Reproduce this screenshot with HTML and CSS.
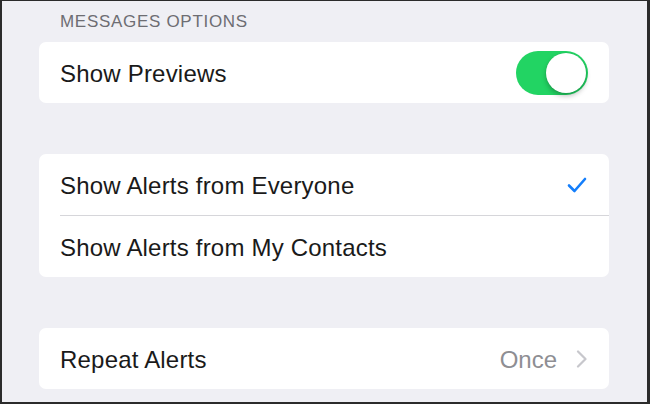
FILE: index.html
```html
<!DOCTYPE html>
<html>
<head>
<meta charset="utf-8">
<link rel="stylesheet" href="styles.css">
</head>
<body>
<div class="screen">
  <div class="section-header">MESSAGES OPTIONS</div>
  <div class="card">
    <div class="row">
      <span class="label">Show Previews</span>
      <span class="toggle"><span class="knob"></span></span>
    </div>
  </div>

  <div class="card card-gap">
    <div class="row">
      <span class="label">Show Alerts from Everyone</span>
      <svg class="check" width="20" height="18" viewBox="0 0 20 18">
        <path d="M2 9.5 L7.5 15 L18 3" fill="none" stroke="#147efb" stroke-width="2.6" stroke-linecap="round" stroke-linejoin="round"/>
      </svg>
    </div>
    <div class="divider"></div>
    <div class="row">
      <span class="label">Show Alerts from My Contacts</span>
    </div>
  </div>

  <div class="card card-gap">
    <div class="row">
      <span class="label">Repeat Alerts</span>
      <span class="detail">
        <span class="value">Once</span>
        <svg class="chevron" width="12" height="18" viewBox="0 0 12 18">
          <path d="M2 1.5 L9.5 9 L2 16.5" fill="none" stroke="#c7c7cc" stroke-width="2.2" stroke-linecap="round" stroke-linejoin="round"/>
        </svg>
      </span>
    </div>
  </div>
</div>
</body>
</html>
```

FILE: styles.css
```css
html, body {
  margin: 0;
  padding: 0;
}
body {
  width: 650px;
  height: 404px;
  overflow: hidden;
  font-family: "Liberation Sans", Arial, sans-serif;
}
.screen {
  box-sizing: border-box;
  width: 650px;
  height: 404px;
  background: #efeff4;
  border-style: solid;
  border-color: #2b2b2b;
  border-width: 1px 3px 2px 2px;
  padding: 10px 0 0 37px;
}
.section-header {
  font-size: 17px;
  line-height: 21px;
  color: #6d6d72;
  padding-left: 21px;
  margin-bottom: 10px;
  letter-spacing: 0.7px;
}
.card {
  width: 570px;
  background: #ffffff;
  border-radius: 7px;
}
.card-gap {
  margin-top: 51px;
}
.row {
  height: 61px;
  display: flex;
  align-items: center;
  justify-content: space-between;
  padding: 0 21px;
}
.label {
  font-size: 24px;
  color: #1a1a1a;
  padding-top: 2px;
  letter-spacing: 0.2px;
}
.divider {
  height: 1px;
  background: #d6d6da;
  margin-left: 21px;
}
.toggle {
  position: relative;
  width: 72px;
  height: 44px;
  border-radius: 22px;
  background: #22d463;
}
.knob {
  position: absolute;
  right: 2px;
  top: 2px;
  width: 40px;
  height: 40px;
  border-radius: 50%;
  background: #fff;
  box-shadow: 0 3px 5px rgba(0,0,0,0.25), 0 0 0 0.5px rgba(0,0,0,0.08);
}
.check {
  margin-right: 1px;
  margin-top: 1px;
}
.detail {
  display: flex;
  align-items: center;
  gap: 19px;
}
.value {
  font-size: 24px;
  color: #8e8e93;
  padding-top: 2px;
}
.chevron {
  margin-top: 1px;
}
```
